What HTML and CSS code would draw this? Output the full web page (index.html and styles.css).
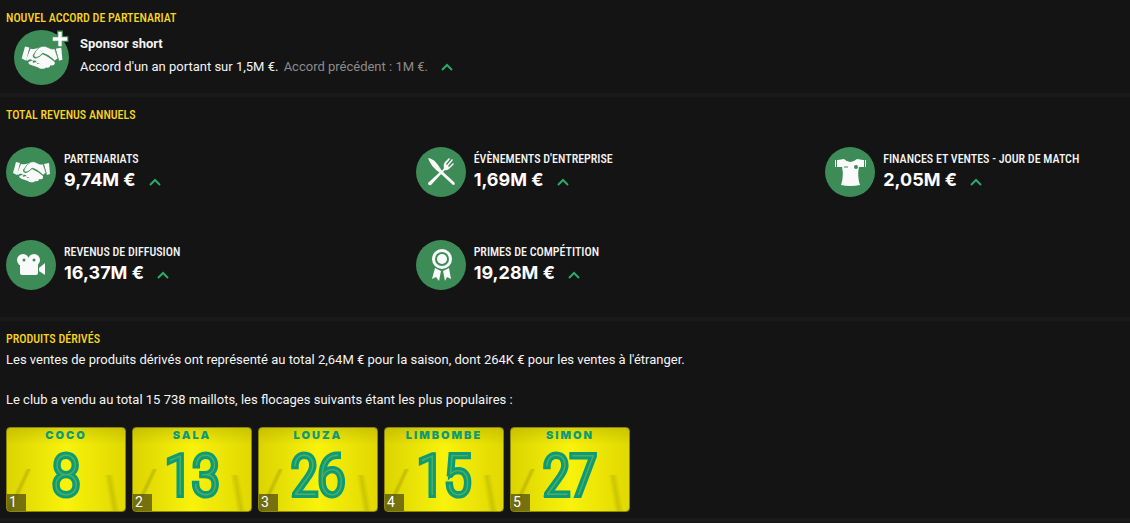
FILE: index.html
```
<!DOCTYPE html>
<html lang="fr">
<head>
    <meta charset="UTF-8">
    <title>Revenus du club</title>
    <link rel="stylesheet" href="styles.css">
</head>
<body>
    <!-- shared drawings -->
    <svg class="defs" aria-hidden="true">
        <symbol id="handshake" viewBox="0 0 50 50">
            <path d="M10 15l4 1-3 12-4-2zM38 17l5-1 1 11-3 1z"/>
            <path d="M15 17q4 1 8-1-4 4-6 7 0 3 3 3 3-1 6-4 5 2 11 7v2q-1 2-4 1 0 3-4 2-1 2-4 1l-1-2q0-3-3-3-1-3-4-2-2-3-5 0l-1-1z"/>
            <path d="M18 23q2-6 7-8 3-1 6 1 3 2 6 1l3 9-3 2q-6-6-11-7-3 4-6 4-2 0-2-2z" stroke="#3d8c57" stroke-width=".6"/>
            <path d="M13 29l3-1q2 0 1 2l3-1q2 1 1 2 3-1 3 1 3 0 2 3-2 1-4-1l-3-1-3-1q-3-1-3-3z"/>
        </symbol>
        <symbol id="up" viewBox="0 0 12 8">
            <path d="M1 7l5-5 5 5" fill="none" stroke="#2bab68" stroke-width="2"/>
        </symbol>
    </svg>

    <section class="panel">
        <h2>Nouvel accord de partenariat</h2>
        <div class="deal">
            <div class="deal-icon">
                <svg class="icon"><use href="#handshake"/></svg>
                <svg class="plus" viewBox="0 0 16 16"><path d="M6 1h4v5h5v4h-5v5H6v-5H1V6h5z"/></svg>
            </div>
            <div class="deal-text">
                <strong>Sponsor short</strong>
                <p>Accord d'un an portant sur 1,5M €. <span class="old">Accord précédent : 1M €.</span><svg class="up"><use href="#up"/></svg></p>
            </div>
        </div>
    </section>

    <section class="panel">
        <h2>Total revenus annuels</h2>
        <div class="revenues">
            <div class="item">
                <svg class="icon"><use href="#handshake"/></svg>
                <div>
                    <h3>Partenariats</h3>
                    <p class="value">9,74M €<svg class="up"><use href="#up"/></svg></p>
                </div>
            </div>
            <div class="item">
                <svg class="icon" viewBox="0 0 50 50">
                    <path d="M12 11q6 1 10 7l4 6-2 2q-9-6-12-15z"/>
                    <path d="M26 24l12 11q2 3-1 3L24 26z"/>
                    <path d="M12 36l14-13 1 2-12 13q-3 1-3-2z"/>
                    <path d="M26 24l2-3q-1-4 1-6l4-4 1 1-4 5 1 1 5-6 1 1-5 6 1 1 4-4 1 1-4 4q-3 3-5 2l-2 2z"/>
                </svg>
                <div>
                    <h3>Évènements d'entreprise</h3>
                    <p class="value">1,69M €<svg class="up"><use href="#up"/></svg></p>
                </div>
            </div>
            <div class="item">
                <svg class="icon" viewBox="0 0 50 50">
                    <path d="M13 13l6-1q6 6 13 0l6 1v7h-4q-2 9 1 18-10 2-19 0 3-9 1-18h-4z"/>
                    <circle class="hole" cx="31" cy="20" r="2"/>
                    <path class="cut" d="M19 20h4"/>
                    <path d="M10 13h1v7h-1zM40 13h1v7h-1zM12 13h1v7h-1zM38 13h1v7h-1z"/>
                </svg>
                <div>
                    <h3>Finances et ventes - jour de match</h3>
                    <p class="value">2,05M €<svg class="up"><use href="#up"/></svg></p>
                </div>
            </div>
            <div class="item">
                <svg class="icon" viewBox="0 0 50 50">
                    <circle cx="17" cy="20" r="6"/>
                    <circle cx="28" cy="20" r="6"/>
                    <rect x="14" y="21" width="18" height="14" rx="2"/>
                    <path d="M33 28l6-5v12l-6-4z"/>
                    <circle class="hole" cx="18" cy="20" r="1.5"/>
                    <circle class="hole" cx="28" cy="20" r="1.5"/>
                </svg>
                <div>
                    <h3>Revenus de diffusion</h3>
                    <p class="value">16,37M €<svg class="up"><use href="#up"/></svg></p>
                </div>
            </div>
            <div class="item">
                <svg class="icon" viewBox="0 0 50 50">
                    <path d="M19 28l6 3-2 10-3-4-4 2zM33 28l-6 3 2 10 2-4 4 2z"/>
                    <circle cx="26" cy="19" r="10"/>
                    <circle class="hole" cx="26" cy="19" r="7"/>
                    <circle cx="26" cy="19" r="5"/>
                </svg>
                <div>
                    <h3>Primes de compétition</h3>
                    <p class="value">19,28M €<svg class="up"><use href="#up"/></svg></p>
                </div>
            </div>
        </div>
    </section>

    <section class="panel">
        <h2>Produits dérivés</h2>
        <p class="text">Les ventes de produits dérivés ont représenté au total 2,64M € pour la saison, dont 264K € pour les ventes à l'étranger.</p>
        <p class="text">Le club a vendu au total 15 738 maillots, les flocages suivants étant les plus populaires :</p>
        <div class="shirts">
            <div class="shirt"><b>COCO</b><span class="number">8</span><span class="rank">1</span></div>
            <div class="shirt"><b>SALA</b><span class="number">13</span><span class="rank">2</span></div>
            <div class="shirt"><b>LOUZA</b><span class="number">26</span><span class="rank">3</span></div>
            <div class="shirt"><b>LIMBOMBE</b><span class="number">15</span><span class="rank">4</span></div>
            <div class="shirt"><b>SIMON</b><span class="number">27</span><span class="rank">5</span></div>
        </div>
    </section>
</body>
</html>
```
FILE: styles.css
```
body {
    margin: 0;
    background-color: #141414;
    color: #f4f4f4;
    font-family: Roboto, "Liberation Sans", sans-serif;
    font-size: 13px;
    line-height: 20px;
}
h2, h3, p {
    margin: 0;
}
.defs {
    display: none;
}
.panel {
    padding: 8px 0 6px 6px;
    border-bottom: 4px solid #1a1a1a;
}
h2, h3 {
    font-family: "Roboto Condensed", "Liberation Sans Narrow", Roboto, sans-serif;
    font-size: 12px;
    line-height: 20px;
    font-weight: 500;
    text-transform: uppercase;
}
h2 {
    margin-bottom: 1px;
    color: #f7d51d;
}
.icon {
    display: block;
    flex: none;
    width: 50px;
    height: 50px;
    border-radius: 50%;
    background-color: #3d8c57;
    fill: #fafafa;
}
.hole {
    fill: #3d8c57;
}
.cut {
    fill: none;
    stroke: #3d8c57;
}
.up {
    width: 12px;
    height: 8px;
    margin-left: 13px;
}

/* new deal */
.deal {
    display: flex;
    gap: 11px;
    padding: 0 0 2px 8px;
}
.deal-icon {
    position: relative;
    padding-top: 1px;
}
.deal-icon .icon {
    width: 55px;
    height: 55px;
}
.plus {
    position: absolute;
    top: 1px;
    right: 0;
    width: 18px;
    height: 18px;
    fill: #fff;
    stroke: #3d8c57;
}
.deal-text {
    padding-top: 5px;
}
.deal-text p {
    padding-top: 3px;
}
.old {
    margin-left: 2px;
    color: #8c8c8c;
}

/* yearly revenues */
.revenues {
    display: grid;
    grid-template-columns: repeat(2, calc(36% + 5px)) 1fr;
    row-gap: 43px;
    padding: 21px 0;
}
.item {
    display: flex;
    gap: 8px;
}
.item h3 {
    padding-top: 2px;
}
.value {
    font-family: Inter, sans-serif;
    font-size: 18px;
    line-height: 22px;
    font-weight: 700;
    color: #fff;
}

/* shirts */
.text {
    margin-bottom: 20px;
}
.shirts {
    display: flex;
    gap: 6px;
    margin-top: -3px;
}
.shirt {
    position: relative;
    box-sizing: border-box;
    width: 120px;
    height: 85px;
    border: 1px solid #8b8706;
    border-radius: 4px;
    overflow: hidden;
    text-align: center;
    color: #0c9b79;
    background:
        linear-gradient(115deg, transparent 42%, rgba(130, 125, 0, 0.35) 50%, transparent 58%) 0 100% / 24px 42px no-repeat,
        linear-gradient(80deg, transparent 35%, rgba(130, 125, 0, 0.25) 50%, transparent 65%) 100% 100% / 26px 36px no-repeat,
        linear-gradient(rgba(150, 145, 0, 0.3), transparent 20%),
        linear-gradient(90deg, #dcd400, #f8f20c 50%, #e0d800);
}
.shirt b {
    display: block;
    font-family: Inter, sans-serif;
    font-size: 11px;
    line-height: 14px;
    font-weight: 900;
    letter-spacing: 2px;
}
.number {
    display: block;
    font-family: "Roboto Condensed", "Liberation Sans Narrow", Roboto, sans-serif;
    font-size: 56px;
    line-height: 68px;
    font-weight: 100;
    color: #55ad5c;
    -webkit-text-stroke: 6px #0c9b79;
    paint-order: stroke fill;
}
.rank {
    position: absolute;
    left: 0;
    bottom: 0;
    width: 19px;
    height: 17px;
    line-height: 16px;
    font-size: 14px;
    color: #fff;
    background-color: rgba(70, 68, 20, 0.7);
    text-indent: 2px;
    text-align: left;
}
```
